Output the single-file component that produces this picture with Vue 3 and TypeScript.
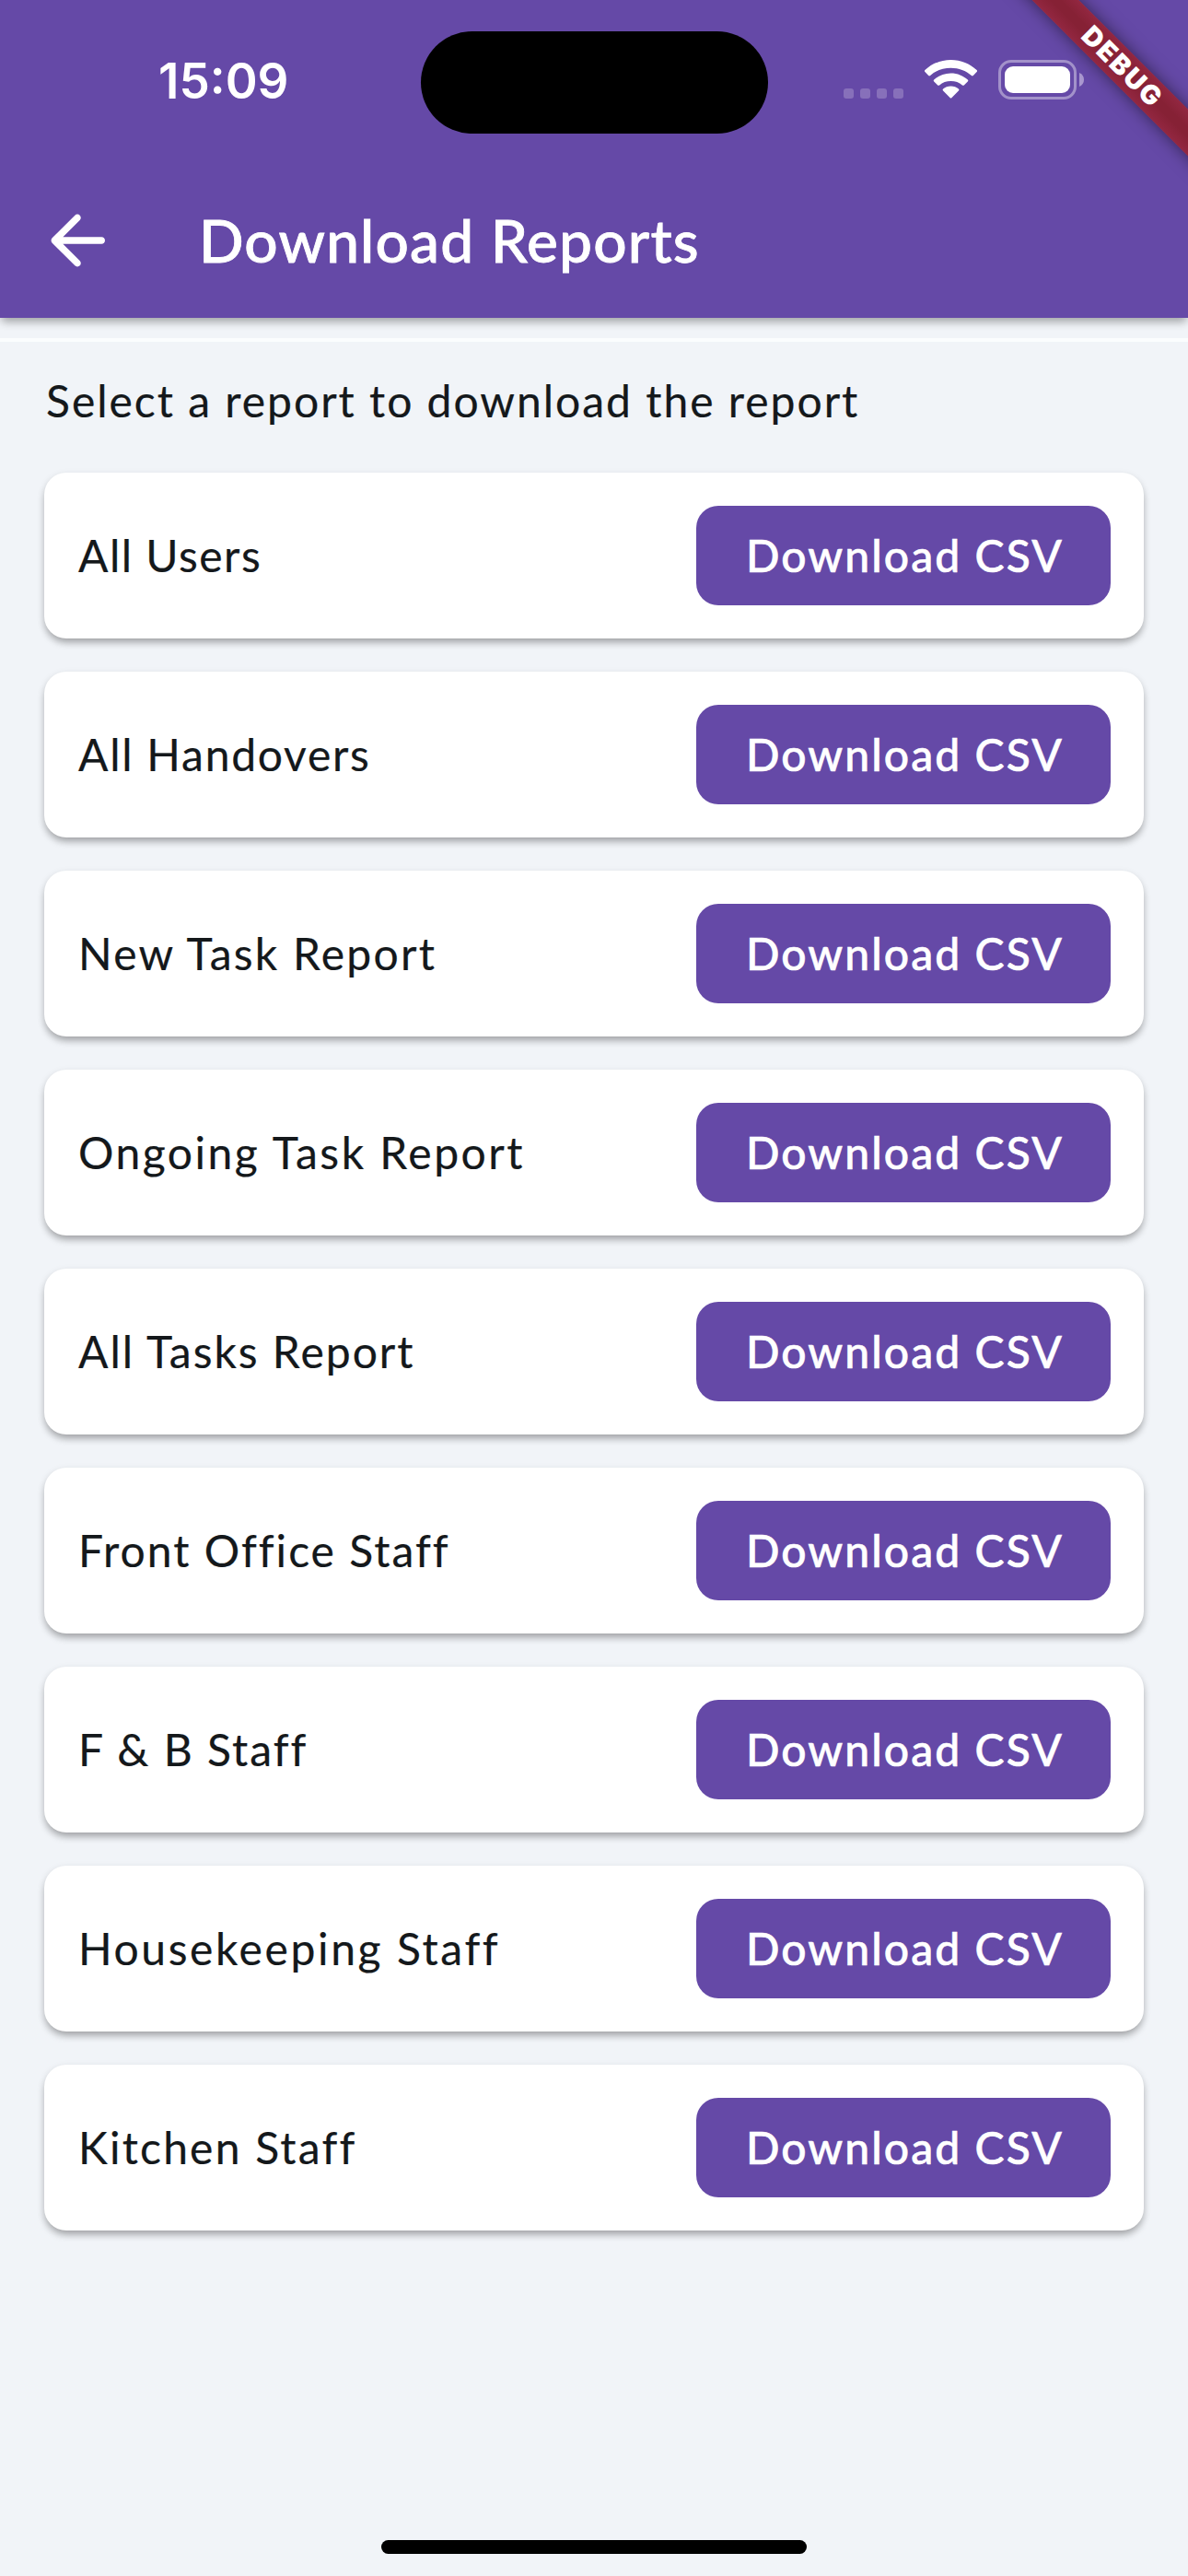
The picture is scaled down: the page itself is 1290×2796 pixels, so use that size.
<script setup lang="ts">
interface Report {
  name: string
  tracking: number
}

// tracking: letter spacing of the row label, in pixels
const reports: Report[] = [
  { name: 'All Users', tracking: 1.5 },
  { name: 'All Handovers', tracking: 1.75 },
  { name: 'New Task Report', tracking: 2.25 },
  { name: 'Ongoing Task Report', tracking: 2.5 },
  { name: 'All Tasks Report', tracking: 2 },
  { name: 'Front Office Staff', tracking: 2 },
  { name: 'F & B Staff', tracking: 2 },
  { name: 'Housekeeping Staff', tracking: 2.6 },
  { name: 'Kitchen Staff', tracking: 2.2 },
]
</script>

<template>
  <div class="screen">
    <header class="header">
      <div class="status">
        <div class="clock">15:09</div>
        <div class="island"></div>
        <div class="indicators">
          <div class="signal"><i v-for="n in 4" :key="n"></i></div>
          <svg class="wifi" viewBox="0 0 57 42" width="57" height="42">
            <path d="M28.500 0C39.400 0 49.300 4.200 56.600 11.100Q57.600 12.100 56.600 13.100L52.800 17Q51.900 17.900 50.900 17C45 11.700 37.100 8.700 28.500 8.700S12 11.700 6.100 17Q5.100 17.900 4.200 17L.4 13.100Q-.6 12.100.4 11.100C7.700 4.200 17.600 0 28.500 0Z" />
            <path d="M28.500 14.400C35.600 14.400 42 17.100 46.800 21.500Q47.800 22.500 46.800 23.500L42.800 27.400Q41.900 28.300 40.900 27.400C37.600 24.500 33.200 23 28.500 23S19.400 24.500 16.100 27.400Q15.100 28.300 14.200 27.400L10.200 23.500Q9.200 22.500 10.200 21.500C15 17.100 21.400 14.400 28.500 14.400Z" />
            <path d="M28.500 28.500C31.800 28.500 34.700 29.700 36.900 31.600Q37.900 32.500 36.900 33.500L29.500 41.100Q28.500 42.100 27.500 41.100L20.100 33.500Q19.100 32.500 20.100 31.600C22.300 29.700 25.200 28.500 28.500 28.500Z" />
          </svg>
          <svg class="battery" viewBox="0 0 93 43" width="93" height="43">
            <rect x="1.500" y="1.500" width="82" height="40" rx="12.500" class="shell" />
            <rect x="7" y="7" width="71" height="29" rx="9" />
            <path d="M88 14C91.200 15.300 93 18.100 93 21.500S91.200 27.700 88 29Z" class="nub" />
          </svg>
        </div>
      </div>
      <div class="appbar">
        <svg class="back" viewBox="0 0 24 24" width="90" height="90">
          <path d="M19 11H7.830l4.880-4.880c.39-.39.39-1.030 0-1.420-.39-.39-1.020-.39-1.410 0l-6.590 6.590c-.39.39-.39 1.020 0 1.410l6.590 6.590c.39.39 1.020.39 1.410 0 .39-.39.39-1.020 0-1.410L7.830 13H19c.55 0 1-.45 1-1s-.45-1-1-1z" />
        </svg>
        <h1 class="title">Download Reports</h1>
      </div>
      <div class="corner"><div class="banner">DEBUG</div></div>
    </header>
    <div class="divider"></div>
    <main class="content">
      <p class="hint">Select a report to download the report</p>
      <ul class="list">
        <li v-for="report in reports" :key="report.name" class="card">
          <span class="label" :style="{ letterSpacing: report.tracking + 'px' }">{{ report.name }}</span>
          <button type="button" class="download">Download CSV</button>
        </li>
      </ul>
    </main>
    <footer class="home"><div class="home-bar"></div></footer>
  </div>
</template>

<style>
body {
  margin: 0;
  background: #f1f4f8;
}
</style>

<style scoped>
.screen {
  display: flex;
  flex-direction: column;
  width: 1290px;
  height: 2796px;
  overflow: hidden;
  background: #f1f4f8;
  color: #14181b;
  font-family: Lato, 'Open Sans', sans-serif;
}
.header {
  position: relative;
  z-index: 1;
  flex: none;
  height: 345px;
  background: #6549a7;
  color: #fff;
  box-shadow: 0 6px 9px -2px rgba(0, 0, 0, 0.27), 0 3px 12px -1px rgba(0, 0, 0, 0.12);
}
.status {
  display: grid;
  grid-template-columns: 456.500px 377px 456.500px;
  height: 177px;
}
.clock {
  padding: 56px 0 0 172px;
  font: 600 53px/64px Inter, sans-serif;
}
.island {
  height: 111px;
  margin-top: 33.500px;
  border-radius: 56px;
  background: #000;
}
.indicators {
  display: flex;
  align-items: flex-start;
  padding: 65px 0 0 82.500px;
}
.signal {
  display: flex;
  gap: 7px;
  margin-top: 31px;
}
.signal i {
  width: 11px;
  height: 11px;
  border-radius: 3px;
  background: #8770ba;
}
.wifi {
  margin-left: 23px;
  fill: #fff;
}
.battery {
  margin-left: 23px;
  fill: #fff;
}
.shell {
  fill: none;
  stroke: #a392ca;
  stroke-width: 3;
}
.nub {
  fill: #a997cf;
}
.appbar {
  display: flex;
  align-items: center;
  height: 168px;
  padding-left: 39px;
}
.back {
  fill: #fff;
}
.title {
  margin: 0 0 1px 87px;
  font-size: 64px;
  font-weight: 500;
  line-height: 84px;
  letter-spacing: 1.150px;
  -webkit-text-stroke: 0.800px currentColor;
}
.corner {
  position: absolute;
  top: 0;
  right: 0;
  width: 240px;
  height: 240px;
  overflow: hidden;
}
.banner {
  position: absolute;
  left: 18px;
  top: 54px;
  width: 300px;
  height: 36px;
  background: linear-gradient(#932741, #862135 40%, #862135 60%, #932741);
  box-shadow: 0 0 18px rgba(0, 0, 0, 0.5);
  color: #fff;
  font-family: Inter, sans-serif;
  font-size: 29px;
  font-weight: 900;
  line-height: 36px;
  letter-spacing: 2px;
  text-align: center;
  text-indent: 2px;
  transform: rotate(45deg);
}
.divider {
  flex: none;
  height: 4px;
  margin-top: 22px;
  background: #fbfdfe;
}
.content {
  flex: 1;
  padding: 34px 48px 0;
}
.hint {
  margin: 0 0 48px 2px;
  font-size: 48px;
  line-height: 60px;
  letter-spacing: 1.980px;
  white-space: nowrap;
  -webkit-text-stroke: 0.200px currentColor;
}
.list {
  display: flex;
  flex-direction: column;
  gap: 36px;
  margin: 0;
  padding: 0;
  list-style: none;
}
.card {
  display: flex;
  align-items: center;
  justify-content: space-between;
  box-sizing: border-box;
  height: 180px;
  padding: 0 36px 0 37px;
  border-radius: 24px;
  background: #fff;
  box-shadow: 0 6px 9px -2px rgba(0, 0, 0, 0.27), 0 3px 9px rgba(0, 0, 0, 0.12);
}
.label {
  font-size: 48px;
  line-height: 60px;
  white-space: nowrap;
  -webkit-text-stroke: 0.200px currentColor;
}
.download {
  width: 450px;
  height: 108px;
  padding: 0;
  border: 0;
  border-radius: 24px;
  background: #6549a7;
  color: #fff;
  font: 500 48px/60px Lato, 'Open Sans', sans-serif;
  letter-spacing: 2.100px;
  text-indent: 3px;
  -webkit-text-stroke: 0.600px currentColor;
}
.home {
  display: flex;
  justify-content: center;
  flex: none;
  height: 39px;
}
.home-bar {
  width: 462px;
  height: 15px;
  border-radius: 8px;
  background: #000;
}
</style>
